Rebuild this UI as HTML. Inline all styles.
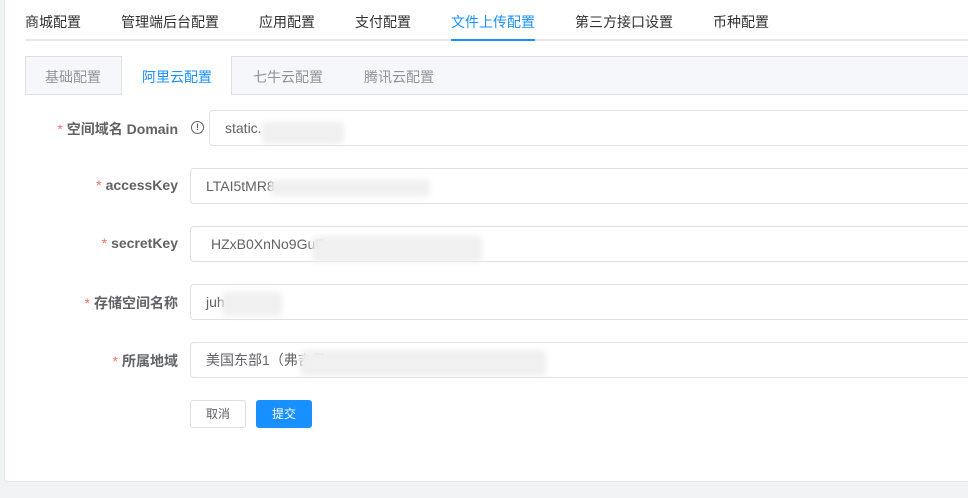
<!DOCTYPE html>
<html><head><meta charset="utf-8"><style>
*{box-sizing:border-box;margin:0;padding:0}
body{width:968px;height:498px;background:#f2f3f5;font-family:"Liberation Sans","Noto Sans CJK SC",sans-serif;font-size:14px;color:#303133;position:relative;overflow:hidden}
.card{position:absolute;left:4px;top:-5px;width:980px;height:487px;background:#fff;border:1px solid #e6e8ec;border-radius:4px}
.t{position:absolute;top:12px;font-size:14px;color:#303133}
.line{position:absolute;left:25px;right:0;top:39px;height:2px;background:#e4e7ed}
.act{position:absolute;left:451px;width:84px;top:39px;height:2px;background:#1890ff}
.sub{position:absolute;left:25px;right:-2px;top:56px;height:39px;background:#f5f7fa;border:1px solid #dcdfe6}
.st{position:absolute;top:67px;color:#909399;font-size:14px}
.lab{position:absolute;font-weight:bold;color:#606266;font-size:14px;text-align:right}
.lab b{color:#f56c6c;font-weight:normal;margin-right:4px}
.in{position:absolute;left:190px;right:-4px;height:36px;border:1px solid #dcdfe6;border-radius:4px;padding-left:15px;line-height:34px;color:#606266;font-size:14px}
.blur{position:absolute;background:#f0f0f0;filter:blur(3px);border-radius:4px}
.btn{position:absolute;top:400px;height:28px;width:56px;border-radius:3px;font-size:12px;text-align:center;line-height:26px}
</style></head><body>
<div class="card"></div>
<span class="t" style="left:25px">商城配置</span>
<span class="t" style="left:121px">管理端后台配置</span>
<span class="t" style="left:259px">应用配置</span>
<span class="t" style="left:355px">支付配置</span>
<span class="t" style="left:451px;color:#1890ff">文件上传配置</span>
<span class="t" style="left:575px">第三方接口设置</span>
<span class="t" style="left:713px">币种配置</span>
<div class="line"></div><div class="act"></div>
<div class="sub"></div>
<div style="position:absolute;left:121px;top:56px;width:111px;height:39px;background:#fff;border-left:1px solid #dcdfe6;border-right:1px solid #dcdfe6"></div>
<span class="st" style="left:45px">基础配置</span>
<span class="st" style="left:142px;color:#1890ff">阿里云配置</span>
<span class="st" style="left:253px">七牛云配置</span>
<span class="st" style="left:364px">腾讯云配置</span>

<div class="lab" style="left:20px;width:158px;top:119px"><b>*</b>空间域名 Domain</div>
<div style="position:absolute;left:191px;top:121px;width:13px;height:13px;border:1px solid #606266;border-radius:50%;font-size:9px;line-height:11px;text-align:center;color:#606266;font-weight:bold">!</div>
<div class="in" style="left:209px;top:110px">static.</div>
<div class="blur" style="left:262px;top:122px;width:82px;height:22px"></div>

<div class="lab" style="left:20px;width:158px;top:177px"><b>*</b>accessKey</div>
<div class="in" style="top:168px">LTAI5tMR8</div>
<div class="blur" style="left:270px;top:180px;width:160px;height:16px"></div>

<div class="lab" style="left:20px;width:158px;top:235px"><b>*</b>secretKey</div>
<div class="in" style="top:226px;padding-left:20px">HZxB0XnNo9GuE</div>
<div class="blur" style="left:312px;top:236px;width:170px;height:26px"></div>

<div class="lab" style="left:20px;width:158px;top:293px"><b>*</b>存储空间名称</div>
<div class="in" style="top:284px">juh</div>
<div class="blur" style="left:222px;top:292px;width:60px;height:24px"></div>

<div class="lab" style="left:20px;width:158px;top:351px"><b>*</b>所属地域</div>
<div class="in" style="top:342px">美国东部1（弗吉尼</div>
<div class="blur" style="left:300px;top:350px;width:246px;height:26px"></div>

<div class="btn" style="left:190px;border:1px solid #dcdfe6;color:#606266;background:#fff">取消</div>
<div class="btn" style="left:256px;background:#1890ff;color:#fff;border:1px solid #1890ff">提交</div>
</body></html>
